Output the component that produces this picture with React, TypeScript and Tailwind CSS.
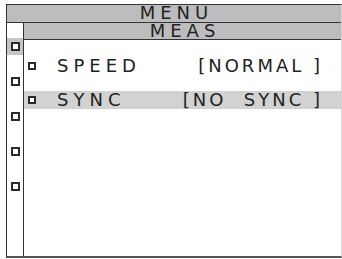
import React from "react";

const Sq = ({ small }: { small?: boolean }) => (
  <div className={`box-border border-2 border-[#2b2b2b] bg-white ${small ? "w-[8px] h-[8px]" : "w-[9px] h-[9px]"}`} />
);

export default function App() {
  const font = { fontFamily: '"DejaVu Sans", Verdana, sans-serif' };
  return (
    <div className="w-[342px] h-[259px] bg-white overflow-hidden pt-[4px] pl-[6px]" style={font}>
      <div className="w-[336px] h-[254px] box-border border-t-[1.5px] border-l-[1.5px] border-b-2 border-t-[#333] border-l-[#333] border-b-[#555] border-r-[1.5px] border-r-[#d4d4d4] flex flex-col">
        <div className="h-[17.5px] bg-[#bdbdc0] flex justify-center text-[18px] leading-[16px] tracking-[5px] text-[#222] border-b-[1.5px] border-[#333]">
          <span className="pl-[5px]">MENU</span>
        </div>
        <div className="flex flex-1">
          <div className="w-[16px] flex flex-col pt-[15px]">
            {[0, 1, 2, 3, 4].map((i) => (
              <div key={i} className="h-[35px]">
                <div className={`h-[17px] flex items-center justify-center ${i === 0 ? "bg-[#c6c6c8]" : ""}`}>
                  <Sq />
                </div>
              </div>
            ))}
          </div>
          <div className="flex-1 flex flex-col border-l-[1.5px] border-[#333]">
            <div className="h-[17px] bg-[#bdbdc0] flex justify-center text-[18px] leading-[16px] tracking-[5px] text-[#222] border-b-[1.5px] border-[#333]">
              <span className="pl-[5px]">MEAS</span>
            </div>
            <div className="flex flex-col pt-[17px] gap-[16px] text-[18px] leading-none text-[#222]">
              <div className="h-[18px] flex items-center pl-[4px] pr-[18px]">
                <Sq small />
                <span className="ml-[21px] tracking-[5px]">SPEED</span>
                <span className="ml-auto whitespace-pre tracking-[3px]">[NORMAL ]</span>
              </div>
              <div className="h-[18px] flex items-center pl-[4px] pr-[18px] bg-[#d2d2d2]">
                <Sq small />
                <span className="ml-[21px] tracking-[5px]">SYNC</span>
                <span className="ml-auto whitespace-pre tracking-[3px]">[NO  SYNC ]</span>
              </div>
            </div>
          </div>
        </div>
      </div>
    </div>
  );
}
